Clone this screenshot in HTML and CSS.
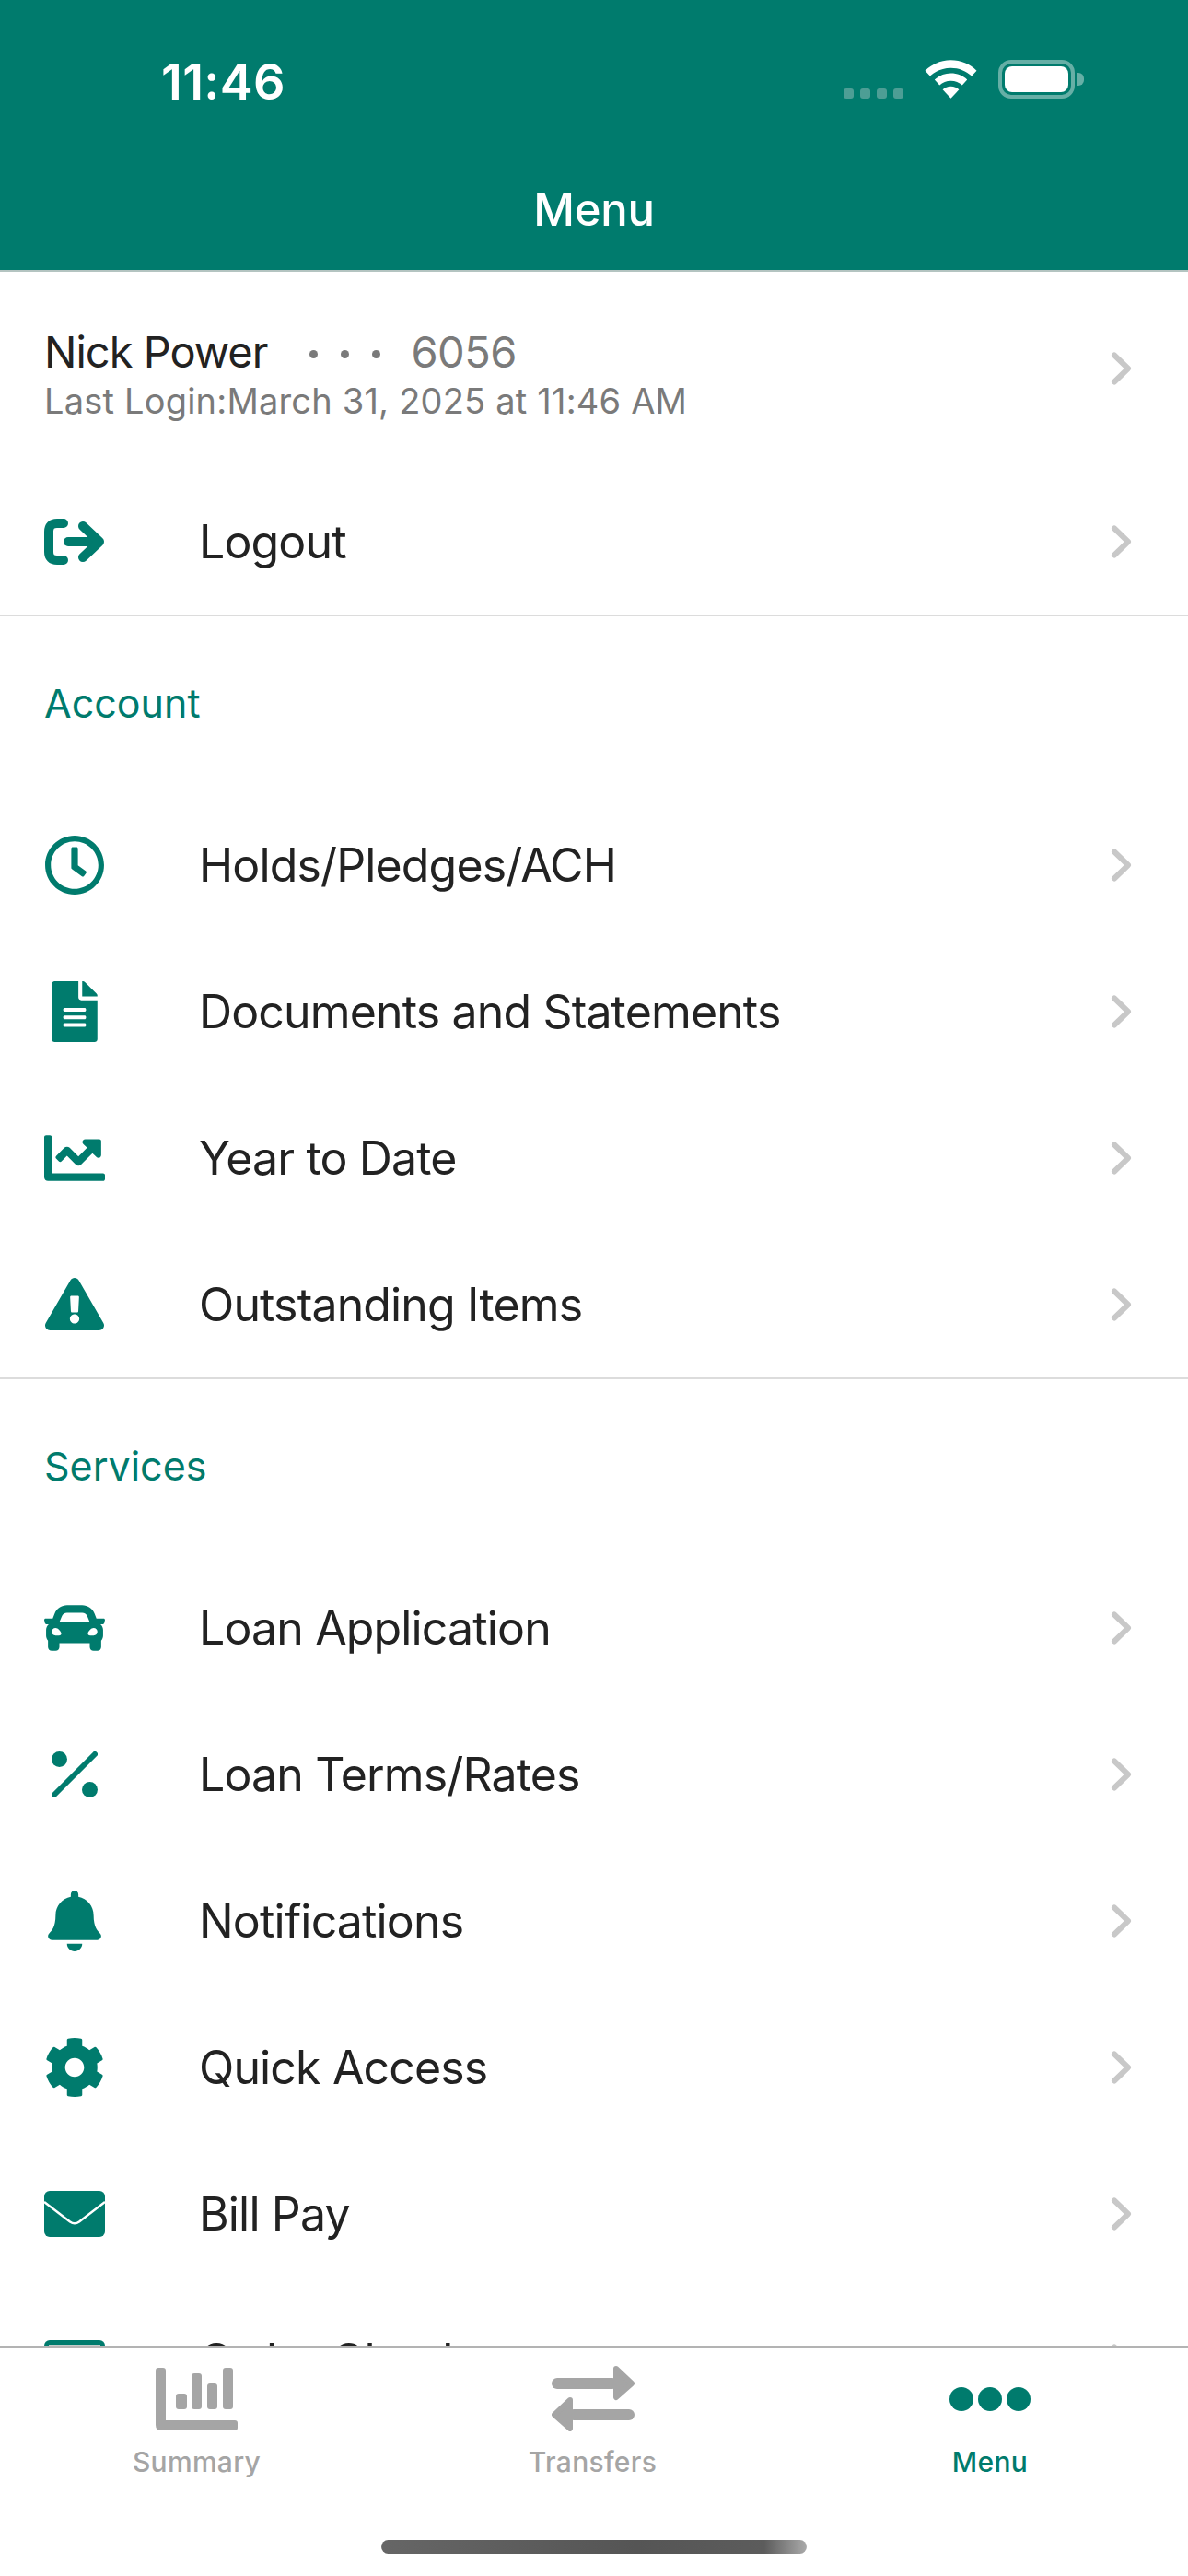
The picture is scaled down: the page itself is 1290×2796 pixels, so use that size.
FILE: index.html
```html
<!doctype html>
<html lang="en">
<head>
  <meta charset="UTF-8">
  <title>Menu</title>
  <link rel="stylesheet" href="styles.css">
</head>
<body>
<div class="screen">

  <div class="header">
    <div class="status">
      <span class="time">11:46</span>
      <div class="status-icons">
        <div class="signal"><i></i><i></i><i></i><i></i></div>
        <svg class="wifi" viewBox="0 0 58 42"><path d="M29 0c11 0 21 4.300 28.500 11.500L52 17.500C46 12 38 8.500 29 8.500S12 12 6 17.500L.5 11.500C8 4.300 18 0 29 0z"/><path d="M29 14.500c7 0 13.300 2.700 18 7l-5.500 6C38.200 24.500 33.800 22.700 29 22.700s-9.200 1.800-12.500 4.800l-5.500-6c4.700-4.300 11-7 18-7z"/><path d="M29 29c3.500 0 6.700 1.300 9 3.500L29 42l-9-9.500c2.300-2.200 5.500-3.500 9-3.500z"/></svg>
        <div class="battery"><div class="battery-body"><div class="battery-fill"></div></div><div class="battery-cap"></div></div>
      </div>
    </div>
    <div class="title">Menu</div>
  </div>

  <div class="content">
    <a class="row row-user">
      <div class="user-text">
        <div class="user-line"><span class="user-name">Nick Power</span><span class="user-dots"><i></i><i></i><i></i></span><span class="user-acct">6056</span></div>
        <div class="user-login">Last Login:March 31, 2025 at 11:46 AM</div>
      </div>
      <svg class="chev" viewBox="0 0 24 36"><path d="M4 3.500L19 18 4 32.500"/></svg>
    </a>
    <a class="row row-logout">
      <span class="ico"><svg width="66" height="50" viewBox="0 0 66 50" class="ico-line"><path d="M21 5H14Q5 5 5 14V36Q5 45 14 45H21"/><path d="M26 25H58"/><path d="M42 8L60 25 42 42"/></svg></span>
      <span class="label">Logout</span>
      <svg class="chev" viewBox="0 0 24 36"><path d="M4 3.500L19 18 4 32.500"/></svg>
    </a>

    <div class="section">
      <div class="section-title">Account</div>
      <a class="row">
        <span class="ico"><svg width="66" height="66" viewBox="0 0 512 512"><path d="M256 8C119 8 8 119 8 256s111 248 248 248 248-111 248-248S393 8 256 8zm0 448c-110.500 0-200-89.500-200-200S145.500 56 256 56s200 89.500 200 200-89.500 200-200 200zm61.800-104.400l-84.900-61.700c-3.100-2.300-4.900-5.900-4.900-9.700V116c0-6.600 5.400-12 12-12h32c6.600 0 12 5.400 12 12v141.700l66.800 48.600c5.400 3.900 6.500 11.400 2.600 16.800L334.600 349c-3.900 5.300-11.400 6.500-16.800 2.600z"/></svg></span>
        <span class="label">Holds/Pledges/ACH</span>
        <svg class="chev" viewBox="0 0 24 36"><path d="M4 3.500L19 18 4 32.500"/></svg>
      </a>
      <a class="row">
        <span class="ico"><svg width="50" height="66" viewBox="0 0 384 512"><path d="M224 136V0H24C10.700 0 0 10.700 0 24v464c0 13.300 10.700 24 24 24h336c13.300 0 24-10.700 24-24V160H248c-13.200 0-24-10.800-24-24zm64 236c0 6.600-5.400 12-12 12H108c-6.600 0-12-5.400-12-12v-8c0-6.600 5.400-12 12-12h168c6.600 0 12 5.400 12 12v8zm0-64c0 6.600-5.400 12-12 12H108c-6.600 0-12-5.400-12-12v-8c0-6.600 5.400-12 12-12h168c6.600 0 12 5.400 12 12v8zm0-72v8c0 6.600-5.400 12-12 12H108c-6.600 0-12-5.400-12-12v-8c0-6.600 5.400-12 12-12h168c6.600 0 12 5.400 12 12zm96-114.100v6.100H256V0h6.100c6.400 0 12.500 2.500 17 7l97.900 98c4.500 4.500 7 10.600 7 16.900z"/></svg></span>
        <span class="label">Documents and Statements</span>
        <svg class="chev" viewBox="0 0 24 36"><path d="M4 3.500L19 18 4 32.500"/></svg>
      </a>
      <a class="row">
        <span class="ico"><svg width="66" height="66" viewBox="0 0 512 512"><path d="M496 384H64V80c0-8.840-7.160-16-16-16H16C7.160 64 0 71.160 0 80v336c0 17.670 14.330 32 32 32h464c8.840 0 16-7.160 16-16v-32c0-8.840-7.160-16-16-16zM464 96H345.940c-21.380 0-32.090 25.850-16.970 40.970l32.400 32.400L288 242.750l-73.370-73.370c-12.500-12.500-32.760-12.500-45.250 0l-68.690 68.690c-6.250 6.250-6.250 16.380 0 22.630l22.620 22.620c6.250 6.250 16.380 6.250 22.630 0L192 237.250l73.370 73.370c12.500 12.500 32.760 12.500 45.250 0l96-96 32.400 32.400c15.120 15.120 40.970 4.410 40.970-16.970V112c.010-8.840-7.150-16-16-16z"/></svg></span>
        <span class="label">Year to Date</span>
        <svg class="chev" viewBox="0 0 24 36"><path d="M4 3.500L19 18 4 32.500"/></svg>
      </a>
      <a class="row">
        <span class="ico"><svg width="64" height="57" viewBox="0 0 576 512"><path d="M569.517 440.013C587.975 472.007 564.806 512 527.940 512H48.054c-36.937 0-59.999-40.055-41.577-71.987L246.423 23.985c18.467-32.009 64.720-31.951 83.154 0l239.940 416.028zM288 354c-25.405 0-46 20.595-46 46s20.595 46 46 46 46-20.595 46-46-20.595-46-46-46zm-43.673-165.346l7.418 136c.347 6.364 5.609 11.346 11.982 11.346h48.546c6.373 0 11.635-4.982 11.982-11.346l7.418-136c.375-6.874-5.098-12.654-11.982-12.654h-63.383c-6.884 0-12.356 5.780-11.981 12.654z"/></svg></span>
        <span class="label">Outstanding Items</span>
        <svg class="chev" viewBox="0 0 24 36"><path d="M4 3.500L19 18 4 32.500"/></svg>
      </a>
    </div>

    <div class="section">
      <div class="section-title">Services</div>
      <a class="row">
        <span class="ico"><svg width="66" height="66" viewBox="0 0 512 512"><path d="M499.990 176h-59.870l-16.640-41.600C406.380 91.630 365.570 64 319.500 64h-127c-46.060 0-86.880 27.630-103.990 70.400L71.870 176H12.010C4.200 176-1.530 183.340.37 190.910l6 24C7.700 220.250 12.500 224 18.010 224h20.070C24.650 235.730 16 252.780 16 272v48c0 16.120 6.160 30.670 16 41.930V416c0 17.670 14.330 32 32 32h32c17.670 0 32-14.330 32-32v-32h256v32c0 17.670 14.330 32 32 32h32c17.670 0 32-14.330 32-32v-54.070c9.840-11.250 16-25.800 16-41.930v-48c0-19.220-8.650-36.270-22.070-48H494c5.510 0 10.310-3.750 11.640-9.090l6-24c1.890-7.570-3.840-14.910-11.650-14.910zm-352.060-17.830c7.290-18.220 24.940-30.170 44.570-30.170h127c19.630 0 37.280 11.950 44.570 30.170L384 208H128l19.930-49.830zM96 319.800c-19.200 0-32-12.760-32-31.900S76.800 256 96 256s48 28.710 48 47.850-28.800 15.950-48 15.950zm320 0c-19.200 0-48 3.190-48-15.950S396.800 256 416 256s32 12.760 32 31.900-12.800 31.900-32 31.900z"/></svg></span>
        <span class="label">Loan Application</span>
        <svg class="chev" viewBox="0 0 24 36"><path d="M4 3.500L19 18 4 32.500"/></svg>
      </a>
      <a class="row">
        <span class="ico"><svg width="50" height="50" viewBox="0 0 50 50"><circle cx="8.500" cy="8.500" r="8.500"/><circle cx="41.500" cy="41.500" r="8.500"/><path class="ico-slash" d="M3 47L47 3"/></svg></span>
        <span class="label">Loan Terms/Rates</span>
        <svg class="chev" viewBox="0 0 24 36"><path d="M4 3.500L19 18 4 32.500"/></svg>
      </a>
      <a class="row">
        <span class="ico"><svg width="58" height="66" viewBox="0 0 448 512"><path d="M224 512c35.320 0 63.970-28.650 63.970-64H160.030c0 35.350 28.650 64 63.970 64zm215.390-149.710c-19.320-20.760-55.470-51.990-55.470-154.290 0-77.700-54.480-139.900-127.940-155.160V32c0-17.670-14.320-32-31.980-32s-31.980 14.330-31.980 32v20.840C118.560 68.100 64.080 130.300 64.080 208c0 102.300-36.150 133.530-55.470 154.290-6 6.450-8.660 14.160-8.610 21.710.110 16.400 12.980 32 32.100 32h383.800c19.120 0 32-15.600 32.100-32 .050-7.550-2.610-15.270-8.610-21.710z"/></svg></span>
        <span class="label">Notifications</span>
        <svg class="chev" viewBox="0 0 24 36"><path d="M4 3.500L19 18 4 32.500"/></svg>
      </a>
      <a class="row">
        <span class="ico"><svg width="66" height="66" viewBox="0 0 512 512"><path d="M487.400 315.700l-42.600-24.600c4.300-23.200 4.300-47 0-70.200l42.600-24.600c4.900-2.800 7.100-8.600 5.500-14-11.100-35.600-30-67.800-54.700-94.600-3.800-4.100-10-5.100-14.800-2.300L380.800 110c-17.900-15.400-38.500-27.300-60.800-35.100V25.800c0-5.600-3.900-10.500-9.400-11.700-36.700-8.200-74.300-7.800-109.200 0-5.500 1.200-9.400 6.100-9.400 11.700V75c-22.200 7.900-42.800 19.800-60.800 35.100L88.700 85.500c-4.900-2.800-11-1.900-14.800 2.300-24.700 26.700-43.600 58.900-54.700 94.600-1.700 5.400.6 11.200 5.500 14L67.300 221c-4.300 23.200-4.300 47 0 70.200l-42.600 24.600c-4.900 2.800-7.100 8.600-5.500 14 11.100 35.600 30 67.800 54.700 94.600 3.800 4.100 10 5.100 14.800 2.300l42.600-24.600c17.900 15.400 38.500 27.300 60.800 35.100v49.200c0 5.600 3.900 10.500 9.400 11.700 36.700 8.200 74.300 7.800 109.200 0 5.500-1.200 9.400-6.100 9.400-11.700v-49.200c22.200-7.900 42.800-19.800 60.800-35.100l42.600 24.600c4.900 2.800 11 1.900 14.800-2.300 24.700-26.700 43.600-58.900 54.700-94.600 1.500-5.500-.7-11.300-5.600-14.100zM256 336c-44.100 0-80-35.900-80-80s35.900-80 80-80 80 35.900 80 80-35.900 80-80 80z"/></svg></span>
        <span class="label">Quick Access</span>
        <svg class="chev" viewBox="0 0 24 36"><path d="M4 3.500L19 18 4 32.500"/></svg>
      </a>
      <a class="row">
        <span class="ico"><svg width="66" height="50" viewBox="0 0 66 50"><rect width="66" height="50" rx="6"/><path class="ico-fold" d="M0 12L28 33.500Q33 37 38 33.500L66 12"/></svg></span>
        <span class="label">Bill Pay</span>
        <svg class="chev" viewBox="0 0 24 36"><path d="M4 3.500L19 18 4 32.500"/></svg>
      </a>
      <a class="row">
        <span class="ico"><svg width="66" height="44" viewBox="0 0 66 44"><rect width="66" height="44" rx="6"/><rect x="5" y="5" width="56" height="34" fill="#c4cbc9"/></svg></span>
        <span class="label">Order Checks</span>
        <svg class="chev" viewBox="0 0 24 36"><path d="M4 3.500L19 18 4 32.500"/></svg>
      </a>
    </div>
  </div>

  <div class="tabbar">
    <div class="tabs">
      <div class="tab">
        <div class="tab-ico"><svg width="89" height="68" viewBox="0 0 89 68"><path d="M0 3q0-3 3-3h5q3 0 3 3v54h75q3 0 3 3v5q0 3-3 3H6q-6 0-6-6z"/><rect x="22" y="28" width="12" height="17" rx="3"/><rect x="39" y="6" width="11" height="39" rx="3"/><rect x="56" y="17" width="11" height="28" rx="3"/><rect x="73" y="0" width="11" height="45" rx="3"/></svg></div>
        <span>Summary</span>
      </div>
      <div class="tab">
        <div class="tab-ico"><svg width="90" height="71" viewBox="0 0 90 71"><rect x="0" y="13" width="72" height="12" rx="6"/><path class="tab-head" d="M70 3L87 19 70 34z"/><rect x="18" y="47" width="72" height="12" rx="6"/><path class="tab-head" d="M20 37L3 53 20 68z"/></svg></div>
        <span>Transfers</span>
      </div>
      <div class="tab tab-on">
        <div class="tab-ico"><svg width="88" height="26" viewBox="0 0 88 26"><circle cx="13" cy="13" r="13"/><circle cx="44" cy="13" r="13"/><circle cx="75" cy="13" r="13"/></svg></div>
        <span>Menu</span>
      </div>
    </div>
    <div class="home-bar"></div>
  </div>
</div>
</body>
</html>
```
FILE: styles.css
```css
html,body{margin:0;padding:0;background:#fff;}
body{font-family:Inter,"Liberation Sans",sans-serif;color:#222;}
a{display:flex;color:inherit;text-decoration:none;}
i{display:block;}

.screen{width:1290px;height:2796px;display:flex;flex-direction:column;overflow:hidden;}

/* header */
.header{height:295px;box-sizing:border-box;border-bottom:2px solid #b4c4c1;background:#007b6d;color:#fff;flex:none;}
.status{height:178px;box-sizing:border-box;padding:60px 113px 0 175px;display:flex;justify-content:space-between;align-items:flex-start;}
.time{font-size:54px;font-weight:600;line-height:58px;letter-spacing:.3px;}
.status-icons{display:flex;align-items:flex-start;gap:23px;padding-top:5px;}
.signal{display:flex;gap:7px;padding-top:31px;}
.signal i{width:11px;height:11px;border-radius:3px;background:#4d9e95;}
.wifi{width:57px;height:42px;fill:#fff;}
.battery{display:flex;align-items:center;}
.battery-body{width:83px;height:42px;box-sizing:border-box;border:4px solid #66afa6;border-radius:14px;padding:3px;}
.battery-fill{height:100%;background:#fff;border-radius:8px;}
.battery-cap{width:7px;height:14px;background:#66afa6;border-radius:0 6px 6px 0;margin-left:3px;}
.title{text-align:center;font-size:49px;font-weight:550;line-height:60px;letter-spacing:-.2px;margin-top:20px;}

/* list */
.content{flex:1;min-height:0;overflow:hidden;}
.row{height:159px;align-items:center;padding:0 60px 0 48px;}
.ico{width:66px;flex:none;display:flex;justify-content:center;fill:#007b6d;}
.ico-line path{fill:none;stroke:#007b6d;stroke-width:10;stroke-linecap:round;stroke-linejoin:round;}
.ico-slash{fill:none;stroke:#007b6d;stroke-width:6;stroke-linecap:round;}
.ico-fold{fill:none;stroke:#fff;stroke-width:2.5;}
.label{flex:1;margin-left:102px;font-size:50px;line-height:60px;letter-spacing:-.85px;}
.chev{width:24px;height:36px;flex:none;fill:none;stroke:#c8c8c8;stroke-width:6;stroke-linecap:round;stroke-linejoin:round;}

.row-user{height:210px;}
.user-text{flex:1;padding-top:10px;}
.user-line{display:flex;align-items:center;height:58px;}
.user-name{font-size:47px;letter-spacing:-1px;}
.user-dots{display:flex;gap:25px;margin:0 33px 0 46px;padding-top:6px;}
.user-dots i{width:9px;height:9px;border-radius:50%;background:#7a7a7a;}
.user-acct{font-size:47px;letter-spacing:-.5px;color:#7a7a7a;}
.user-login{font-size:38px;line-height:46px;color:#7a7a7a;letter-spacing:.2px;margin-top:1px;}
.row-logout{height:162px;box-sizing:border-box;padding-top:3px;}

.section{border-top:2px solid #dcdcdc;}
.section-title{height:190px;box-sizing:border-box;padding:66px 0 0 48px;font-size:43px;line-height:56px;color:#007b6d;}

/* tabs */
.tabbar{flex:none;height:250px;box-sizing:border-box;border-top:2px solid #b3b3b3;background:#fff;position:relative;}
.tabs{display:grid;grid-template-columns:427px 433px 430px;}
.tab{display:flex;flex-direction:column;align-items:center;padding-top:20px;fill:#a5a5a5;color:#a5a5a5;font-size:30px;font-weight:450;line-height:40px;letter-spacing:.3px;}
.tab-ico{height:71px;display:flex;align-items:center;}
.tab-head{stroke:#a5a5a5;stroke-width:6;stroke-linejoin:round;}
.tab span{margin-top:13px;}
.tab-on{fill:#007b6d;color:#007b6d;}
.home-bar{position:absolute;left:414px;bottom:24px;width:462px;height:15px;border-radius:8px;background:linear-gradient(90deg,#666,#555 60%,#5c5c5c 90%,#aaa);}
```
